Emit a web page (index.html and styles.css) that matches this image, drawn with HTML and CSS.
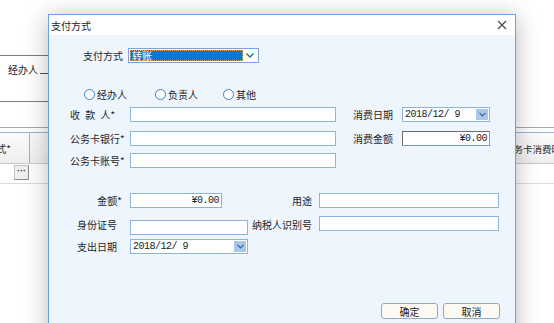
FILE: index.html
```html
<!DOCTYPE html>
<html>
<head>
<meta charset="utf-8">
<link rel="stylesheet" href="styles.css">
</head>
<body>
<div class="page">
  <div class="head-area">
    <div class="page-title">公务卡报销单录入</div>
  </div>
  <div class="agent-row">经办人 <span class="uline"></span></div>
  <div class="gap-row"></div>
  <div class="grid-head">
    <div class="c1"><span>支付方式*</span></div>
    <div class="c2"></div>
    <div class="c3">公务卡消费时间</div>
  </div>
  <div class="grid-row">
    <div class="c1"><span class="dots">···</span></div>
    <div class="c2"></div>
  </div>
</div>

<div class="dlg">
  <div class="dlg-title">
    <span>支付方式</span>
    <svg class="close" width="10" height="10" viewBox="0 0 10 10"><path d="M1 1 L9 9 M9 1 L1 9" stroke="#444" stroke-width="1.1" fill="none"/></svg>
  </div>
  <div class="dlg-body">
    <div class="row r-sel">
      <div class="lbl lbl-sel">支付方式</div>
      <div class="sel">
        <div class="sel-val">转账</div>
        <div class="sel-btn"><svg width="8" height="5" viewBox="0 0 8 5"><path d="M0.5 0.5 L4 4 L7.5 0.5" stroke="#4a5a70" stroke-width="1.3" fill="none"/></svg></div>
      </div>
    </div>
    <div class="row r-radio">
      <div class="radio rd1"><span class="circ"></span>经办人</div>
      <div class="radio rd2"><span class="circ"></span>负责人</div>
      <div class="radio"><span class="circ"></span>其他</div>
    </div>
    <div class="row r-a">
      <div class="lbl lbl-sp">收 款 人*</div>
      <div class="inp w206"></div>
      <div class="rl rl-top">消费日期</div>
      <div class="inp date w88"><span>2018/12/ 9</span><span class="dd"><svg width="7" height="5" viewBox="0 0 7 5"><path d="M0.5 0.8 L3.5 3.8 L6.5 0.8" stroke="#3d5f90" stroke-width="1.2" fill="none"/></svg></span></div>
    </div>
    <div class="row r-b">
      <div class="lbl">公务卡银行*</div>
      <div class="inp w206"></div>
      <div class="rl rl-top">消费金额</div>
      <div class="inp money money-dark w88">¥0.00</div>
    </div>
    <div class="row r-c">
      <div class="lbl">公务卡账号*</div>
      <div class="inp w206"></div>
    </div>
    <div class="row r-d">
      <div class="lbl lbl-r">金额*</div>
      <div class="inp money w92">¥0.00</div>
      <div class="rl rl-d">用途</div>
      <div class="inp w180"></div>
    </div>
    <div class="row r-e">
      <div class="lbl lbl-i">身份证号</div>
      <div class="inp w118 down"></div>
      <div class="rl rl-e">纳税人识别号</div>
      <div class="inp w180 up"></div>
    </div>
    <div class="row r-f">
      <div class="lbl lbl-i">支出日期</div>
      <div class="inp date w118"><span>2018/12/ 9</span><span class="dd"><svg width="7" height="5" viewBox="0 0 7 5"><path d="M0.5 0.8 L3.5 3.8 L6.5 0.8" stroke="#3d5f90" stroke-width="1.2" fill="none"/></svg></span></div>
    </div>
    <div class="row r-btn">
      <div class="btn">确定</div>
      <div class="btn">取消</div>
    </div>
  </div>
</div>
</body>
</html>
```
FILE: styles.css
```css
html, body {
  margin: 0;
  padding: 0;
}
body {
  width: 554px;
  height: 323px;
  overflow: hidden;
  background: #fff;
  position: relative;
  font-family: "Noto Sans CJK SC", "Noto Sans", sans-serif;
  font-size: 10px;
  color: #1e1e1e;
}
.page {
  width: 554px;
}
.head-area {
  display: flow-root;
  height: 56px;
  box-sizing: border-box;
  border-bottom: 1px solid #7d7d7d;
  width: 505px;
}
.page-title {
  margin-top: -19px;
  height: 21px;
  padding-left: 218px;
  font-size: 14px;
  font-weight: bold;
  color: #3a3af2;
  letter-spacing: 2px;
  line-height: 18px;
  white-space: nowrap;
}
.agent-row {
  height: 46px;
  box-sizing: border-box;
  border-bottom: 1px solid #7d7d7d;
  width: 505px;
  padding-left: 8px;
  padding-top: 7px;
  line-height: 14px;
  color: #222;
}
.uline {
  display: inline-block;
  width: 30px;
  height: 10px;
  border-bottom: 1px solid #555;
  vertical-align: baseline;
}
.gap-row {
  height: 26px;
  box-sizing: border-box;
  border-bottom: 1px solid #a8a8a8;
}
.grid-head {
  margin-top: 4px;
  height: 32px;
  box-sizing: border-box;
  border-top: 1px solid #92b6e0;
  border-bottom: 1px solid #c9c9c9;
  background: linear-gradient(#fafafa, #efefef);
  display: flex;
}
.c1 {
  width: 30px;
  flex: none;
  box-sizing: border-box;
  border-right: 1px solid #92b6e0;
  overflow: hidden;
  display: flex;
  align-items: center;
  justify-content: flex-end;
  white-space: nowrap;
  padding-right: 18px;
}
.grid-head .c1 span {
  padding-top: 1px;
}
.c2 {
  flex: 1;
}
.c3 {
  width: 50px;
  flex: none;
  white-space: nowrap;
  overflow: hidden;
  display: flex;
  align-items: center;
  padding-top: 1px;
  font-size: 9.5px;
}
.grid-row {
  height: 20px;
  box-sizing: border-box;
  border-bottom: 1px solid #dcdcdc;
  display: flex;
}
.grid-row .c1 {
  border-right: none;
  padding-right: 1px;
  align-items: flex-start;
  padding-top: 1px;
}
.dots {
  width: 15px;
  height: 15px;
  box-sizing: border-box;
  background: #eeeeee;
  border: 1px solid #c4c4c4;
  border-right-color: #8a8a8a;
  border-bottom-color: #8a8a8a;
  font-size: 9px;
  line-height: 11px;
  text-align: center;
  font-family: "Liberation Sans", sans-serif;
  font-weight: bold;
  color: #333;
}

/* dialog */
.dlg {
  position: absolute;
  left: 48px;
  top: 14px;
  width: 468px;
  height: 330px;
  box-sizing: border-box;
  border: 1px solid #65a4de;
  background: #eef5fd;
  box-shadow: 0 3px 22px rgba(0, 0, 0, 0.28);
}
.dlg-title {
  height: 20px;
  background: #fff;
  display: flex;
  align-items: center;
  justify-content: space-between;
  padding: 0 8px 0 2px;
  color: #222;
}
.close {
  display: block;
}
.dlg-body {
  padding-left: 21px;
}
.row {
  display: flex;
  align-items: center;
  height: 15px;
  white-space: nowrap;
}
.r-sel { margin-top: 13px; }
.r-radio { margin-top: 25px; height: 12px; }
.r-a { margin-top: 7px; }
.r-b { margin-top: 9px; }
.r-c { margin-top: 7px; }
.r-d { margin-top: 25px; }
.r-e { margin-top: 9px; }
.r-f { margin-top: 7px; }
.r-btn {
  margin-top: 49px;
  height: 16px;
  justify-content: flex-end;
  padding-right: 15px;
  gap: 5px;
}
.lbl {
  width: 60px;
  flex: none;
  box-sizing: border-box;
  line-height: 15px;
}
.lbl-sel {
  width: 58px;
  padding-left: 13px;
}
.lbl-sp {
  word-spacing: 3px;
}
.lbl-r {
  text-align: right;
  padding-right: 8px;
}
.lbl-i {
  padding-left: 7px;
}
.rl {
  flex: none;
  box-sizing: border-box;
  line-height: 15px;
}
.rl-top {
  width: 66px;
  padding-left: 17px;
}
.rl-d {
  width: 97px;
  text-align: right;
  padding-right: 7px;
}
.rl-e {
  width: 71px;
  text-align: right;
  padding-right: 7px;
}
.inp {
  height: 15px;
  box-sizing: border-box;
  border: 1px solid #8db3e3;
  background: #fff;
  flex: none;
}
.w206 { width: 206px; }
.w88 { width: 88px; }
.w92 { width: 92px; }
.w118 { width: 118px; }
.w180 { width: 180px; }
.down { margin-top: 5px; }
.up { margin-top: -3px; }
.date,
.money {
  font-family: "Liberation Mono", "DejaVu Sans Mono", monospace;
  font-size: 10px;
  letter-spacing: -0.5px;
  color: #222;
}
.date {
  display: flex;
  align-items: center;
  justify-content: space-between;
  padding-left: 2px;
  padding-right: 1px;
}
.dd {
  width: 12px;
  height: 11px;
  background: #a9c7eb;
  display: flex;
  align-items: center;
  justify-content: center;
}
.dd svg { display: block; }
.money {
  text-align: right;
  padding-right: 2px;
  line-height: 13px;
}
.money-dark {
  border-color: #7a98c4;
  border-left-color: #6d6d6d;
  border-top-color: #6d6d6d;
}
.sel {
  width: 131px;
  height: 15px;
  box-sizing: border-box;
  border: 1px solid #7aa3da;
  background: #fff;
  display: flex;
  padding: 1px;
}
.sel-val {
  flex: 1;
  background: #0a76d8;
  color: #fff;
  outline: 1px dotted #d8b070;
  outline-offset: -1px;
  padding-left: 2px;
  line-height: 11px;
}
.sel-btn {
  width: 14px;
  display: flex;
  align-items: center;
  justify-content: center;
}
.radio {
  display: flex;
  align-items: center;
  gap: 2px;
  flex: none;
}
.rd1 {
  margin-left: 14px;
  width: 71px;
}
.rd2 {
  width: 68px;
}
.circ {
  width: 11px;
  height: 11px;
  box-sizing: border-box;
  border-radius: 50%;
  border: 1px solid #3f80c6;
  background: #fff;
}
.btn {
  width: 57px;
  height: 16px;
  box-sizing: border-box;
  border: 1px solid #8fa9cb;
  border-radius: 3px;
  background: #fdf9f3;
  display: flex;
  align-items: center;
  justify-content: center;
  color: #222;
}
```
